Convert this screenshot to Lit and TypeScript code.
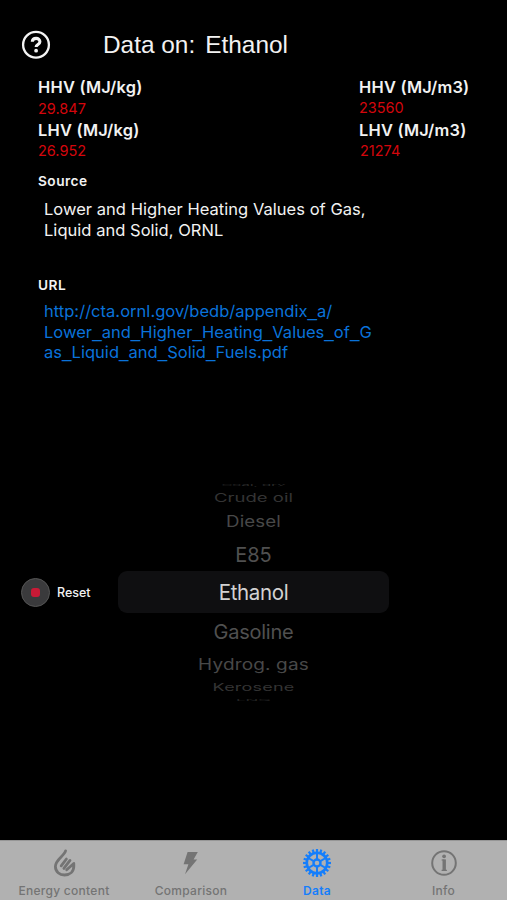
import { LitElement, html, css, svg } from "lit";
import { customElement } from "lit/decorators.js";

interface Row { text: string; h: number; size: number; sy: number; color: string; ls: number; }

const ROWS: Row[] = [
  { text: "Coal, dry", h: 13, size: 15, sy: 0.16, color: "#2a2a2a", ls: 0 },
  { text: "Crude oil", h: 13, size: 18.5, sy: 0.6, color: "#343434", ls: 0 },
  { text: "Diesel", h: 34, size: 18.7, sy: 0.85, color: "#484848", ls: 0.1 },
  { text: "E85", h: 32, size: 20, sy: 1, color: "#505050", ls: 0 },
  { text: "Ethanol", h: 45, size: 20.5, sy: 1.03, color: "#d2d2d2", ls: -0.35 },
  { text: "Gasoline", h: 32, size: 20, sy: 1, color: "#505050", ls: -0.25 },
  { text: "Hydrog. gas", h: 34, size: 19, sy: 0.8, color: "#484848", ls: 0.15 },
  { text: "Kerosene", h: 12, size: 18, sy: 0.58, color: "#343434", ls: 0.2 },
  { text: "LNG", h: 12, size: 17, sy: 0.14, color: "#242424", ls: 0 },
];

const URL_LINES = [
  "http://cta.ornl.gov/bedb/appendix_a/",
  "Lower_and_Higher_Heating_Values_of_G",
  "as_Liquid_and_Solid_Fuels.pdf",
];

const TEETH = Array.from({ length: 20 }, (_, i) => i * 18);
const SPOKES = [0, 60, 120, 180, 240, 300];

@customElement("app-root")
export class AppRoot extends LitElement {
  static styles = css`
    :host { display: flex; flex-direction: column; width: 507px; height: 900px; box-sizing: border-box;
      background: #000; color: #f2f2f2; font-family: Inter, "Liberation Sans", sans-serif; overflow: hidden; }
    header { display: flex; align-items: center; height: 30px; padding: 30px 0 0 21px; }
    .help { display: block; width: 30px; height: 30px; }
    h1 { margin: 0 0 0 52px; font: 400 24.4px/30px "Liberation Sans", sans-serif; white-space: pre; display: flex; gap: 10px; }
    .values { display: grid; grid-template-columns: 321px auto; padding: 16px 0 0 38px; height: 83px; }
    .label { font-weight: 600; font-size: 16.4px; line-height: 23px; letter-spacing: 0.22px; }
    .num { color: #d4060c; font-size: 14.5px; line-height: 20px; }
    .left .num:last-child { margin-top: -1px; }
    .right .num { margin-top: -1px; margin-bottom: 1px; }
    .right .num:last-child { padding-left: 1px; }
    h2 { margin: 0; padding-left: 38px; font-size: 13.7px; font-weight: 600; line-height: 20px; letter-spacing: 0.45px; }
    h2.url { margin-top: 35px; letter-spacing: 0.5px; }
    .source { margin-top: 12px; }
    p { margin: 8px 0 0 44px; width: 335px; font-size: 16.5px; line-height: 20.6px; white-space: nowrap; letter-spacing: 0.03px; }
    p.link { margin-top: 6px; color: #0a72da; }
    .us { font-family: "Liberation Sans", sans-serif; font-size: 17px; line-height: 0; }
    .lower { display: grid; grid-template-columns: 118px 271px 1fr; margin-top: 116px; height: 226px; align-items: center; }
    .reset { display: flex; align-items: center; padding-left: 21px; gap: 7px; font-size: 12.5px; font-weight: 500; padding-top: 1px; }
    .dot { width: 27px; height: 27px; border: 1px solid #555; border-radius: 50%; background: #3a3a3c; display: grid; place-items: center; }
    .dot i { width: 9px; height: 9px; border-radius: 3px; background: #c81a36; }
    .picker { display: flex; flex-direction: column; align-self: start; }
    .row { display: flex; align-items: center; justify-content: center; white-space: pre; flex: none; }
    .row.sel { background: #0f0f11; border-radius: 9px; height: 42px !important; margin: 0 0 3px; box-sizing: border-box; padding-top: 2px; }
    nav { margin-top: auto; height: 59px; border-top: 1px solid #969696; background: #b1b1b1; display: grid; grid-template-columns: 128px 126px 126px 127px; }
    .tab { display: flex; flex-direction: column; align-items: center; padding-top: 7px; color: #747474; font-size: 12px; font-weight: 500; line-height: 16px; letter-spacing: 0.28px; }
    .tab svg { width: 30px; height: 30px; margin-bottom: 5px; }
    .tab.on { color: #157efb; font-weight: 600; }
  `;

  render() {
    return html`
      <header>
        <svg class="help" viewBox="0 0 30 30" fill="none" stroke="#f4f4f4">
          <circle cx="15" cy="14.7" r="12.9" stroke-width="2.3" />
          <path d="M11.3 11.8C11.5 7.2 18.9 7.2 18.9 11.7C18.9 14.6 15.1 14.3 15.1 17" stroke-width="3.1" />
          <circle cx="15.1" cy="20.7" r="1.9" fill="#f4f4f4" stroke="none" />
        </svg>
        <h1><span>Data on:</span><span>Ethanol</span></h1>
      </header>
      <section class="values">
        <div class="left">
          <div class="label">HHV (MJ/kg)</div><div class="num">29.847</div>
          <div class="label">LHV (MJ/kg)</div><div class="num">26.952</div>
        </div>
        <div class="right">
          <div class="label">HHV (MJ/m3)</div><div class="num">23560</div>
          <div class="label">LHV (MJ/m3)</div><div class="num">21274</div>
        </div>
      </section>
      <h2 class="source">Source</h2>
      <p>Lower and Higher Heating Values of Gas,<br />Liquid and Solid, ORNL</p>
      <h2 class="url">URL</h2>
      <p class="link">${URL_LINES.map((line, i) => html`${i ? html`<br />` : ""}${line.split("_").map((part, j) => html`${j ? html`<span class="us">_</span>` : ""}${part}`)}`)}</p>
      <section class="lower">
        <div class="reset"><span class="dot"><i></i></span><span>Reset</span></div>
        <div class="picker">
          ${ROWS.map((r) => html`<div class="row ${r.text === "Ethanol" ? "sel" : ""}" style="height:${r.h}px;color:${r.color}">
            <span style="font-size:${r.size}px;letter-spacing:${r.ls}px;transform:scaleY(${r.sy})">${r.text}</span></div>`)}
        </div>
      </section>
      <nav>
        <div class="tab">
          <svg viewBox="0 0 30 30" fill="none" stroke="currentColor" stroke-width="2.8" stroke-linecap="round" stroke-linejoin="round">
            <path d="M16.6 2.8C15.4 8 6.4 11.5 6.4 18.6C6.4 23.8 10.5 27 15.5 27C21.2 27 24.8 23.4 24.8 18.3V15.5L17.7 21.8" />
            <path d="M12.2 17.8L17.4 11M14.9 20.4L21 12.4" />
          </svg>Energy content</div>
        <div class="tab">
          <svg viewBox="0 0 30 30" fill="currentColor"><path d="M11.6 4H21.8L17.6 11.6H21.2L9 26.3L12.4 16.2H7.6Z" /></svg>Comparison</div>
        <div class="tab on">
          <svg viewBox="0 0 30 30" fill="none" stroke="currentColor">
            <circle cx="15" cy="15" r="10.2" stroke-width="2.6" />
            <circle cx="15" cy="15" r="3.5" stroke-width="2.4" />
            ${TEETH.map((a) => svg`<path d="M15 1V4.5" stroke-width="2.2" transform="rotate(${a} 15 15)" />`)}
            ${SPOKES.map((a) => svg`<path d="M15 5V11.6" stroke-width="2" transform="rotate(${a} 15 15)" />`)}
          </svg>Data</div>
        <div class="tab">
          <svg viewBox="0 0 30 30" fill="none" stroke="currentColor">
            <circle cx="15" cy="15" r="11.8" stroke-width="2" />
            <circle cx="15.1" cy="8.3" r="1.9" fill="currentColor" stroke="none" />
            <path d="M12.6 12H15.3M12.6 22.4H17.9" stroke-width="1.2" />
            <path d="M15.2 11.4V23" stroke-width="3.4" />
          </svg>Info</div>
      </nav>`;
  }
}
